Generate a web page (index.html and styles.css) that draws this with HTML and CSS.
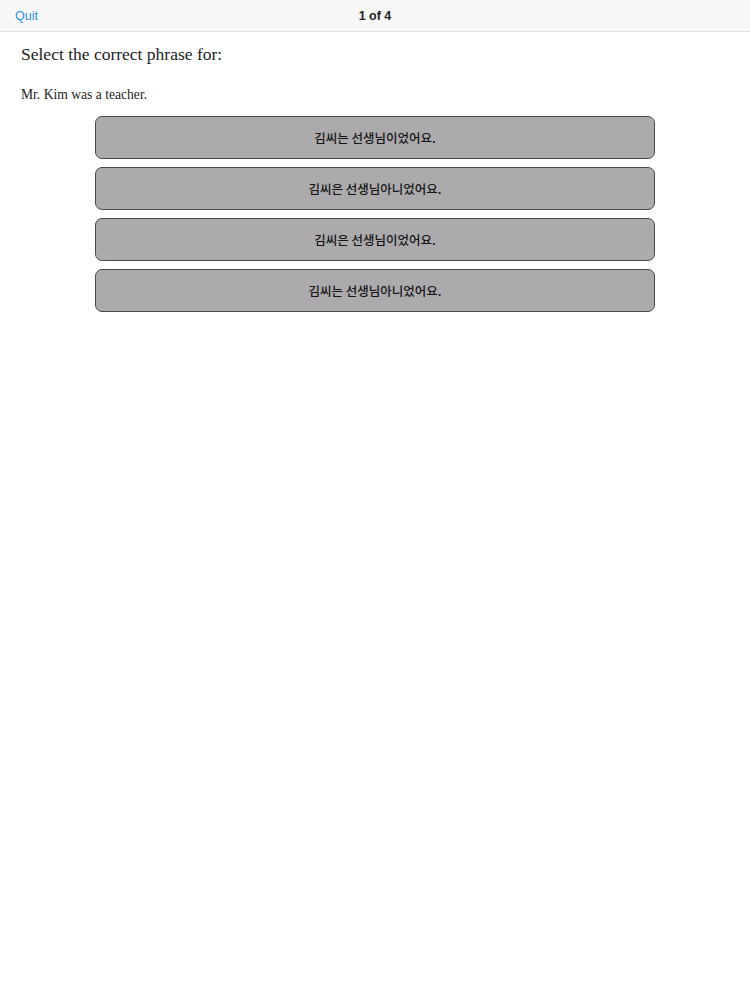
FILE: index.html
```html
<!DOCTYPE html>
<html lang="en">
<head>
<meta charset="utf-8">
<title>Quiz</title>
<link rel="stylesheet" href="styles.css">
</head>
<body>
<header class="navbar">
  <a class="quit" href="#">Quit</a>
  <div class="title">1 of 4</div>
</header>
<main class="content">
  <h1 class="prompt">Select the correct phrase for:</h1>
  <p class="phrase">Mr. Kim was a teacher.</p>
  <div class="options">
    <button class="option">김씨는 선생님이었어요.</button>
    <button class="option">김씨은 선생님아니었어요.</button>
    <button class="option">김씨은 선생님이었어요.</button>
    <button class="option">김씨는 선생님아니었어요.</button>
  </div>
</main>
</body>
</html>
```
FILE: styles.css
```css
html, body {
  margin: 0;
  padding: 0;
  background: #ffffff;
}
body {
  width: 750px;
  min-height: 1000px;
}
.navbar {
  position: relative;
  height: 32px;
  background: #f7f7f7;
  border-bottom: 1px solid #e2e2e2;
  box-sizing: border-box;
  display: flex;
  align-items: center;
  padding-left: 15px;
  font-family: "Liberation Sans", Arial, sans-serif;
  font-size: 12.5px;
}
.quit {
  color: #2f8ddf;
  text-decoration: none;
}
.title {
  position: absolute;
  left: 0;
  right: 0;
  text-align: center;
  font-weight: bold;
  color: #222;
  pointer-events: none;
}
.content {
  padding: 0 21px;
  font-family: "Liberation Serif", "Times New Roman", serif;
  color: #222;
}
.prompt {
  margin: 11px 0 0;
  font-size: 17.5px;
  font-weight: normal;
  line-height: 22px;
}
.phrase {
  margin: 22px 0 0;
  font-size: 13.6px;
  line-height: 16px;
}
.options {
  margin: 13px 0 0 74px;
  width: 560px;
  display: flex;
  flex-direction: column;
  gap: 8px;
}
.option {
  height: 43px;
  margin: 0;
  padding: 0;
  background: #acaaad;
  border: 1.5px solid #4a4a4a;
  border-radius: 7px;
  font-family: "Noto Sans CJK KR", "Noto Sans", sans-serif;
  font-size: 12.5px;
  font-weight: 500;
  color: #151515;
  text-align: center;
  cursor: pointer;
}
```
